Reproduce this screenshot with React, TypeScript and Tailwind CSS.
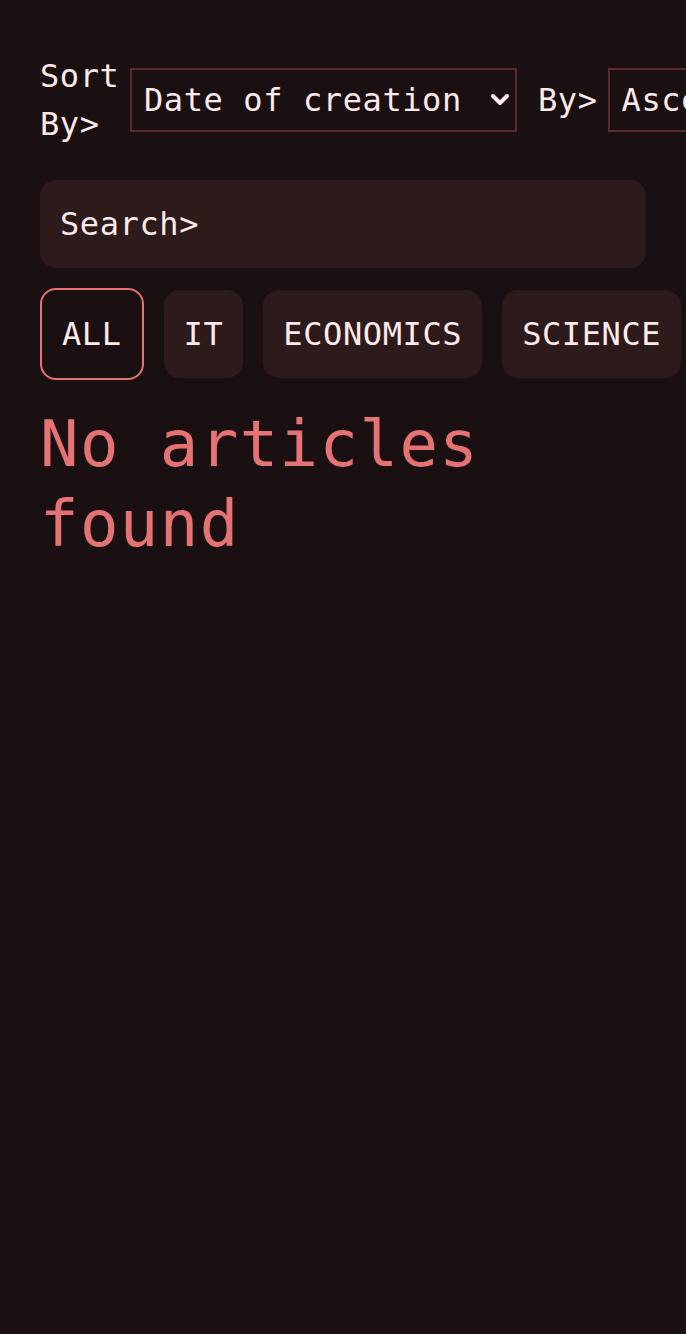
import { useState } from "react";

const categories = ["ALL", "IT", "ECONOMICS", "SCIENCE"];

function Chevron() {
  return (
    <svg width="22" height="14" viewBox="0 0 22 14" className="shrink-0">
      <path d="M4 3 L11 10 L18 3" fill="none" stroke="#fdeaea" strokeWidth="4" strokeLinecap="round" strokeLinejoin="round" />
    </svg>
  );
}

export default function App() {
  const [sortField, setSortField] = useState("date");
  const [order, setOrder] = useState("asc");
  const [query, setQuery] = useState("");
  const [category, setCategory] = useState("ALL");

  return (
    <div className="min-h-[1334px] w-full overflow-hidden bg-[#1b1011] px-10 pt-[52px] font-['DejaVu_Sans_Mono',monospace] text-[32px] leading-[48px] tracking-[0.6px] text-[#fdeaea]">
      <div className="flex flex-nowrap items-center">
        <span className="w-[80px] shrink-0">Sort By&gt;</span>
        <div className="ml-2.5 flex h-16 w-[387px] shrink-0 items-center border-2 border-[#5c2a2b] pl-3 pr-1">
          <select
            value={sortField}
            onChange={(event) => setSortField(event.target.value)}
            className="min-w-0 flex-1 appearance-none bg-transparent outline-none"
          >
            <option value="date">Date of creation</option>
            <option value="title">Title</option>
          </select>
          <Chevron />
        </div>
        <span className="ml-[21px] shrink-0">By&gt;</span>
        <div className="ml-2.5 flex h-16 w-[300px] shrink-0 items-center border-2 border-[#5c2a2b] pl-3 pr-1">
          <select
            value={order}
            onChange={(event) => setOrder(event.target.value)}
            className="min-w-0 flex-1 appearance-none bg-transparent outline-none"
          >
            <option value="asc">Ascending</option>
            <option value="desc">Descending</option>
          </select>
          <Chevron />
        </div>
      </div>

      <input
        value={query}
        onChange={(event) => setQuery(event.target.value)}
        placeholder="Search>"
        className="mt-8 block h-[88px] w-[606px] rounded-2xl bg-[#2d1a1b] px-5 text-[#fdeaea] outline-none placeholder:text-[#fdeaea]"
      />

      <div className="mt-5 flex flex-nowrap items-center gap-5">
        {categories.map((name) => (
          <button
            key={name}
            onClick={() => setCategory(name)}
            className={
              category === name
                ? "shrink-0 rounded-2xl border-2 border-[#e57373] px-5 py-5"
                : "shrink-0 rounded-2xl bg-[#2d1a1b] px-5 py-5"
            }
          >
            {name}
          </button>
        ))}
      </div>

      <p className="mt-5 w-[540px] pt-1 text-[64px] leading-[80px] tracking-[1.4px] text-[#e57373]">No articles found</p>
    </div>
  );
}
